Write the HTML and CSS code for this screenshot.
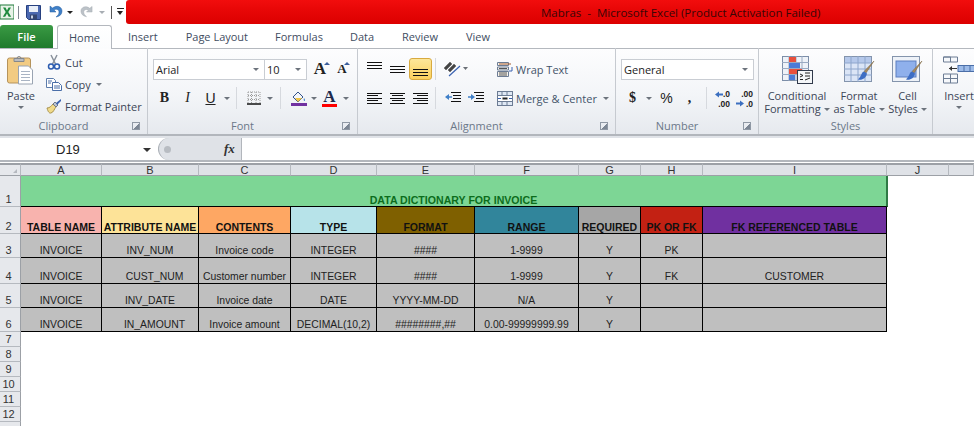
FILE: index.html
```html
<!DOCTYPE html>
<html lang="en">
<head>
    <meta charset="UTF-8">
    <meta name="viewport" content="width=device-width, initial-scale=1.0">
    <title>Mabras - Microsoft Excel</title>
    <link rel="stylesheet" href="styles.css">
</head>
<body>
    <div class="titlebar">
        <div class="quick">
            <svg class="q-excel" width="14" height="16" viewBox="0 0 14 16"><rect x="0" y="1" width="14" height="14" fill="#e8f3e8" stroke="#1f7a3a"/><path d="M3 3.5h2.5L7 6.5l1.6-3H11L8.3 8l2.9 4.800H8.700L7 9.600l-1.800 3.200H2.800L5.700 8z" fill="#1e8a3e"/></svg>
            <span class="q-sep"></span>
            <svg class="q-save" width="15" height="15" viewBox="0 0 15 15"><path d="M.5.500h14v14h-12l-2-2z" fill="#4a68b0" stroke="#27407f"/><rect x="3" y="1" width="9" height="6" fill="#e8eef8"/><rect x="4" y="9.500" width="7" height="5" fill="#33456f"/><rect x="5" y="10.500" width="2" height="3" fill="#c8d2e6"/></svg>
            <svg class="q-undo" width="14" height="14" viewBox="0 0 14 14"><path d="M1 1v6h6L5 5c2-1.500 5-.5 5 2 0 2-1 3.500-3 5 4-.5 6-3 6-6C13 2 8-.500 3.500 3z" fill="#3f80c8" stroke="#2b5f9e" stroke-width=".5"/></svg>
            <span class="q-arrow"></span>
            <svg class="q-redo" width="13" height="14" viewBox="0 0 14 14"><path d="M13 1v6H7l2-2C7 3.500 4 4.500 4 7c0 2 1 3.500 3 5-4-.5-6-3-6-6C1 2 6-.500 10.500 3z" fill="#bcc2c8" stroke="#a4aab0" stroke-width=".5"/></svg>
            <span class="q-arrow grey"></span>
            <span class="q-sep second"></span>
            <span class="q-custom"></span>
        </div>
        <div class="title-red"><span class="title-text">Mabras &nbsp;-&nbsp; Microsoft Excel (Product Activation Failed)</span></div>
    </div>

    <div class="tabs">
        <span class="tab-file">File</span>
        <span class="tab-home">Home</span>
        <span class="tab t-insert">Insert</span>
        <span class="tab t-layout">Page Layout</span>
        <span class="tab t-formulas">Formulas</span>
        <span class="tab t-data">Data</span>
        <span class="tab t-review">Review</span>
        <span class="tab t-view">View</span>
    </div>

    <div class="ribbon">
        <!-- clipboard -->
        <section class="group g-clipboard">
            <div class="group-body">
                <div class="big paste">
                    <svg width="28" height="31" viewBox="0 0 28 31"><rect x=".5" y="3.500" width="23" height="25" rx="2" fill="#f2cb82" stroke="#b5935c"/><path d="M7 4h10v3H7z" fill="#b9bcc0" stroke="#85888c"/><path d="M10 4a2 2 0 0 1 4 0" fill="none" stroke="#85888c"/><path d="M11.500 11.500h10l4 4v14h-14z" fill="#fff" stroke="#9aa4b2"/><path d="M14 17h9M14 20h9M14 23h9M14 26h9" stroke="#a9b4c4"/></svg>
                    <span class="big-text">Paste</span>
                    <span class="arrow"></span>
                </div>
                <div class="small-list">
                    <div class="small-row">
                        <svg width="16" height="16" viewBox="0 0 16 16"><path d="M5 1l4.500 9M11 1L6.500 10" stroke="#8a929c" stroke-width="1.500" fill="none"/><circle cx="5" cy="12.500" r="2.500" fill="none" stroke="#2c5cb0" stroke-width="1.500"/><circle cx="11" cy="12.500" r="2.500" fill="none" stroke="#2c5cb0" stroke-width="1.500"/></svg>
                        <span>Cut</span>
                    </div>
                    <div class="small-row">
                        <svg width="16" height="16" viewBox="0 0 16 16"><path d="M.5 2.500h7l2 2v7h-9z" fill="#fff" stroke="#5c7cab"/><path d="M6.500 6.500h6l3 3v5h-9z" fill="#fff" stroke="#4a6ea8"/><path d="M2 5h4M2 7h3M8 10h6M8 12h6" stroke="#4a6ea8"/></svg>
                        <span>Copy</span><i class="arrow inline"></i>
                    </div>
                    <div class="small-row">
                        <svg width="16" height="16" viewBox="0 0 16 16"><path d="M1 10c3 0 4-2 6-4l3 3c-2 2-2 5-5 6-1.500.5-3-1-4-5z" fill="#f0da8a" stroke="#a8924c"/><path d="M7 6l2-2 3 3-2 2z" fill="#bcc4d0" stroke="#70788a"/><path d="M10 5l5-4 0 2-4 4z" fill="#3a62b0"/></svg>
                        <span>Format Painter</span>
                    </div>
                </div>
            </div>
            <div class="group-foot"><span class="group-label">Clipboard</span><span class="launcher"></span></div>
        </section>

        <!-- font -->
        <section class="group g-font">
            <div class="group-body stack">
                <div class="tool-row">
                    <div class="combo c-font">Arial<i class="arrow"></i></div>
                    <div class="combo c-size">10<i class="arrow"></i></div>
                    <span class="tool w-a"><b class="serif grow">A</b><i class="up"></i></span>
                    <span class="tool w-a"><b class="serif shrink">A</b><i class="up blue"></i></span>
                </div>
                <div class="tool-row low">
                    <span class="tool"><b class="serif glyph">B</b></span>
                    <span class="tool"><i class="serif glyph slant">I</i></span>
                    <span class="tool"><u class="sans glyph">U</u></span>
                    <span class="drop"><i class="arrow"></i></span>
                    <span class="sep s5"></span>
                    <span class="tool">
                        <svg width="14" height="14" viewBox="0 0 14 14"><path d="M1 1h12M1 4.500h12M1 8.500h12M1 1v11M4.500 1v11M9 1v11M13 1v11" stroke="#9a9a9a" stroke-dasharray="1 1" fill="none"/><path d="M0 13h14" stroke="#111" stroke-width="1.500"/></svg>
                    </span>
                    <span class="drop"><i class="arrow"></i></span>
                    <span class="sep s6"></span>
                    <span class="tool">
                        <svg width="16" height="16" viewBox="0 0 16 16"><path d="M2 7l5-5 5 5-5 5z" fill="#f4f6fa" stroke="#33538a"/><path d="M4 8h7l-4 4z" fill="#f0c648"/><path d="M13 8c1 1.500 1.500 2.500.5 3-1 0-1-1.500-.5-3z" fill="#3f7fc8"/><rect x="0" y="13" width="16" height="3" fill="#7030a0"/></svg>
                    </span>
                    <span class="drop narrow"><i class="arrow"></i></span>
                    <span class="tool fontcolor"><b class="serif glyph-a">A</b><i class="color-bar"></i></span>
                    <span class="drop"><i class="arrow"></i></span>
                </div>
            </div>
            <div class="group-foot"><span class="group-label">Font</span><span class="launcher"></span></div>
        </section>

        <!-- alignment -->
        <section class="group g-align">
            <div class="group-body">
                <div class="align-tools stack">
                    <div class="tool-row">
                        <span class="tool"><i class="lines top"><b class="l"></b><b class="l"></b><b class="l"></b></i></span>
                        <span class="tool"><i class="lines"><b class="l"></b><b class="l"></b><b class="l"></b></i></span>
                        <span class="tool on"><i class="lines bottom"><b class="l"></b><b class="l"></b><b class="l"></b></i></span>
                        <span class="sep s3"></span>
                        <span class="tool orient">
                            <svg width="26" height="16" viewBox="0 0 26 16"><path d="M1 7l6-6 2 2-6 6zM5 9l6-6 2 2-6 6z" fill="#444" stroke="#444" stroke-width=".4"/><path d="M6 15L17 5" stroke="#3a62b0" stroke-width="1.200"/><path d="M20 6h5l-2.500 3z" fill="#6a6f76"/></svg>
                        </span>
                    </div>
                    <div class="tool-row low">
                        <span class="tool"><i class="lines five left"><b class="l"></b><b class="m"></b><b class="l"></b><b class="m"></b><b class="l"></b></i></span>
                        <span class="tool"><i class="lines five center"><b class="l"></b><b class="m"></b><b class="l"></b><b class="m"></b><b class="l"></b></i></span>
                        <span class="tool"><i class="lines five right"><b class="l"></b><b class="m"></b><b class="l"></b><b class="m"></b><b class="l"></b></i></span>
                        <span class="sep s3"></span>
                        <span class="tool">
                            <svg width="16" height="12" viewBox="0 0 16 12"><path d="M6 .5h10M8 3.500h8M8 6.500h8M6 9.500h10" stroke="#111"/><path d="M0 5l4-3v6z" fill="#3f7fc8"/><path d="M4 5h3" stroke="#3f7fc8" stroke-width="1.500"/></svg>
                        </span>
                        <span class="tool">
                            <svg width="16" height="12" viewBox="0 0 16 12"><path d="M6 .5h10M8 3.500h8M8 6.500h8M6 9.500h10" stroke="#111"/><path d="M7 5L3 2v6z" fill="#3f7fc8"/><path d="M0 5h4" stroke="#3f7fc8" stroke-width="1.500"/></svg>
                        </span>
                    </div>
                </div>
                <div class="align-wide stack">
                    <div class="wide-row">
                        <svg width="16" height="15" viewBox="0 0 16 15"><path d="M.5 .5h11v3h-11zM.5 5h11v3h-11zM.5 9.500h11v5h-11z" fill="#f6f3ec" stroke="#6c7c94"/><path d="M2 2h12" stroke="#a55a2c"/><path d="M2 6.500h8M2 11h8M2 13h8" stroke="#555"/><path d="M15 5v4h-3" fill="none" stroke="#3a62b0"/></svg>
                        <span>Wrap Text</span>
                    </div>
                    <div class="wide-row">
                        <svg width="16" height="15" viewBox="0 0 16 15"><rect x=".5" y=".5" width="15" height="14" fill="#dfe8f4" stroke="#6c7c94"/><path d="M0 4.500h16M0 10.500h16M5 0v4M10 0v4M5 11v4M10 11v4" stroke="#6c7c94"/><rect x="1" y="5" width="14" height="5" fill="#fff"/><path d="M5.500 7.500h5" stroke="#222" stroke-width="2"/><path d="M1 7.500h3M12 7.500h3" stroke="#3a62b0"/></svg>
                        <span>Merge &amp; Center</span><i class="arrow inline"></i>
                    </div>
                </div>
            </div>
            <div class="group-foot"><span class="group-label">Alignment</span><span class="launcher"></span></div>
        </section>

        <!-- number -->
        <section class="group g-number">
            <div class="group-body stack">
                <div class="tool-row">
                    <div class="combo c-general">General<i class="arrow"></i></div>
                </div>
                <div class="tool-row low">
                    <span class="tool"><b class="serif glyph">$</b></span>
                    <span class="drop"><i class="arrow"></i></span>
                    <span class="tool pct"><span class="sans glyph">%</span></span>
                    <span class="tool"><b class="serif glyph">,</b></span>
                    <span class="sep s5"></span>
                    <span class="tool dec">
                        <svg class="dec-arrow" width="8" height="7" viewBox="0 0 8 7"><path d="M0 3.500L4 .5v2h4v2H4v2z" fill="#3b6fc0"/></svg>
                        <span class="dec-text">.0<br>.00</span>
                    </span>
                    <span class="tool dec">
                        <svg class="dec-arrow low" width="8" height="7" viewBox="0 0 8 7"><path d="M8 3.500L4 .5v2H0v2h4v2z" fill="#3b6fc0"/></svg>
                        <span class="dec-text">.00<br>.0</span>
                    </span>
                </div>
            </div>
            <div class="group-foot"><span class="group-label">Number</span><span class="launcher"></span></div>
        </section>

        <!-- styles -->
        <section class="group g-styles">
            <div class="group-body">
                <div class="big b-cond">
                    <svg width="31" height="28" viewBox="0 0 31 28"><rect x=".5" y=".5" width="26" height="24" fill="#eef2f8" stroke="#7c8ea8"/><path d="M0 6.500h27M0 12.500h27M0 18.500h27M7 0v25M14 0v25M20 0v25" stroke="#9aaac2"/><rect x="7" y="1" width="7" height="5" fill="#e8503c"/><rect x="7" y="7" width="11" height="5" fill="#4a7bd8"/><rect x="7" y="13" width="13" height="5" fill="#e8503c"/><rect x="7" y="19" width="6" height="5" fill="#4a7bd8"/><rect x="15.500" y="14.500" width="15" height="13" fill="#f4f6f8" stroke="#30394a"/><path d="M18 18l3 1.500-3 1.500M23 17h5M23 20h5M18 23.500h3M23 24l5-2" stroke="#222" fill="none"/></svg>
                    <span class="big-text">Conditional<br>Formatting<i class="arrow inline tight"></i></span>
                </div>
                <div class="big b-table">
                    <svg width="31" height="28" viewBox="0 0 31 28"><rect x=".5" y=".5" width="27" height="25" fill="#dbe5f6" stroke="#8494ac"/><rect x="1" y="1" width="26" height="6" fill="#b5c8ea"/><path d="M0 7h28M0 13h28M0 19h28M7 0v26M14 0v26M21 0v26" stroke="#8ea6cc"/><path d="M30 5L22 17l-2-1.500z" fill="#a88a5c" stroke="#77613c" stroke-width=".5"/><path d="M20 15.500c-3 1-2 4-6 8 4 1 8-1 9-6z" fill="#3e6ec4"/></svg>
                    <span class="big-text">Format<br>as Table<i class="arrow inline tight"></i></span>
                </div>
                <div class="big b-cell">
                    <svg width="31" height="28" viewBox="0 0 31 28"><rect x=".5" y=".5" width="27" height="25" fill="#eef2f8" stroke="#8494ac"/><rect x="4" y="5" width="20" height="16" fill="#8fb0ec" stroke="#5c7ec0"/><path d="M30 5L22 17l-2-1.500z" fill="#a88a5c" stroke="#77613c" stroke-width=".5"/><path d="M20 15.500c-3 1-2 4-6 8 4 1 8-1 9-6z" fill="#3e6ec4"/></svg>
                    <span class="big-text">Cell<br>Styles<i class="arrow inline tight"></i></span>
                </div>
            </div>
            <div class="group-foot"><span class="group-label">Styles</span></div>
        </section>

        <!-- cells, cut off by the window -->
        <section class="group g-cells">
            <div class="group-body">
                <div class="big b-insert">
                    <svg width="32" height="28" viewBox="0 0 32 28"><path d="M.5 1h14v5h-14zM.5 1h7M7.500 1v5M.5 18h14v9h-14zM.5 22.500h14M7.500 18v9" fill="#f6f8fb" stroke="#6c7c94"/><rect x="15" y="9.500" width="17" height="6" fill="#9dbbe8" stroke="#4a6ea8"/><path d="M21 9v7M27 9v7" stroke="#4a6ea8"/><path d="M6 12.500h8" stroke="#333"/><path d="M6 12.500l3-2.500v5z" fill="#333"/></svg>
                    <span class="big-text">Insert</span>
                    <span class="arrow"></span>
                </div>
            </div>
            <div class="group-foot"></div>
        </section>
    </div>

    <div class="formula-gap"></div>
    <div class="formula-bar">
        <div class="name-box"><span class="name-text">D19</span><i class="name-arrow"></i></div>
        <div class="fx-part"><span class="fx-knob"></span><span class="fx">fx</span></div>
        <div class="formula-input"></div>
    </div>

    <div class="sheet">
        <div class="corner"><i></i></div>
        <div class="col">A</div><div class="col">B</div><div class="col">C</div><div class="col">D</div><div class="col">E</div>
        <div class="col">F</div><div class="col">G</div><div class="col">H</div><div class="col">I</div><div class="col">J</div><div class="col"></div>

        <div class="row">1</div>
        <div class="cell merged">DATA DICTIONARY FOR INVOICE</div>

        <div class="row">2</div>
        <div class="cell head h-pink">TABLE NAME</div>
        <div class="cell head h-yellow">ATTRIBUTE NAME</div>
        <div class="cell head h-orange">CONTENTS</div>
        <div class="cell head h-cyan">TYPE</div>
        <div class="cell head h-brown">FORMAT</div>
        <div class="cell head h-teal">RANGE</div>
        <div class="cell head h-grey">REQUIRED</div>
        <div class="cell head h-red">PK OR FK</div>
        <div class="cell head h-purple">FK REFERENCED TABLE</div>

        <div class="row">3</div>
        <div class="cell">INVOICE</div><div class="cell">INV_NUM</div><div class="cell">Invoice code</div><div class="cell">INTEGER</div>
        <div class="cell">####</div><div class="cell">1-9999</div><div class="cell">Y</div><div class="cell">PK</div><div class="cell"></div>

        <div class="row">4</div>
        <div class="cell">INVOICE</div><div class="cell shifted">CUST_NUM</div><div class="cell">Customer number</div><div class="cell">INTEGER</div>
        <div class="cell">####</div><div class="cell">1-9999</div><div class="cell">Y</div><div class="cell">FK</div><div class="cell">CUSTOMER</div>

        <div class="row">5</div>
        <div class="cell">INVOICE</div><div class="cell">INV_DATE</div><div class="cell">Invoice date</div><div class="cell">DATE</div>
        <div class="cell">YYYY-MM-DD</div><div class="cell">N/A</div><div class="cell">Y</div><div class="cell"></div><div class="cell"></div>

        <div class="row">6</div>
        <div class="cell">INVOICE</div><div class="cell shifted">IN_AMOUNT</div><div class="cell">Invoice amount</div><div class="cell">DECIMAL(10,2)</div>
        <div class="cell">########,##</div><div class="cell">0.00-99999999.99</div><div class="cell">Y</div><div class="cell"></div><div class="cell"></div>

        <div class="row">7</div>
        <div class="row">8</div>
        <div class="row">9</div>
        <div class="row">10</div>
        <div class="row">11</div>
        <div class="row">12</div>
        <div class="row"></div>
    </div>
</body>
</html>
```

FILE: styles.css
```css
html,body{margin:0;padding:0;height:426px;overflow:hidden;background:#fff;}
body{font-family:"Open Sans",sans-serif;font-size:11px;color:#3c4657;}
i{font-style:normal;}
.serif{font-family:"Liberation Serif",serif;}
.sans{font-family:"Liberation Sans",sans-serif;}
.slant{font-style:italic;}

/* title bar */
.titlebar{display:flex;height:24px;background:#fff;}
.quick{width:126px;flex:none;display:flex;align-items:center;position:relative;}
.q-sep{width:1px;height:13px;background:#7f8790;margin:0 7px 0 4px;}
.q-sep.second{margin:0 5px 0 6px;background:#555;}
.q-undo{margin-left:8px;}
.q-redo{margin-left:7px;}
.q-arrow{width:0;height:0;border:3px solid transparent;border-top:3px solid #222;border-bottom:0;margin-left:4px;}
.q-arrow.grey{border-top-color:#a8adb3;margin-left:6px;}
.q-custom{width:7px;height:7px;border-top:1px solid #222;position:relative;}
.q-custom:after{content:"";position:absolute;left:0;top:2px;border:3.500px solid transparent;border-top:4px solid #222;border-bottom:0;}
.title-red{flex:1;background:linear-gradient(#f20d0d,#e80707 40%,#dc0000);border-radius:3px 0 0 3px;display:flex;align-items:center;padding-left:415px;}
.title-text{font-size:11.500px;color:#3a0606;white-space:nowrap;}

/* tabs */
.tabs{height:24px;display:flex;align-items:flex-start;background:#fff;color:#3f4d5f;padding-top:1px;box-sizing:border-box;}
.tab-file{width:53px;height:23px;background:linear-gradient(#3a9a44,#1f7a2c);color:#fff;border-radius:3px 3px 0 0;display:flex;align-items:center;justify-content:center;font-weight:600;font-size:11px;}
.tab-home{width:55px;height:24px;margin-left:4px;background:linear-gradient(#fff,#fbfcfd);border:1px solid #b4b8be;border-bottom:0;border-radius:3px 3px 0 0;box-sizing:border-box;display:flex;align-items:center;justify-content:center;position:relative;z-index:1;}
.tab{height:23px;display:flex;align-items:center;}
.t-insert{margin-left:16px;}
.t-layout{margin-left:28px;}
.t-formulas{margin-left:27px;}
.t-data{margin-left:27px;}
.t-review{margin-left:28px;}
.t-view{margin-left:28px;}

/* ribbon */
.ribbon{height:86px;display:flex;background:linear-gradient(#fdfdfe,#f3f5f8 55%,#e6e9ee);box-shadow:inset 0 1px 0 #b4b8be;border-bottom:2px solid #b2b6bc;overflow:hidden;}
.group{flex:none;display:flex;flex-direction:column;border-right:1px solid #c6cad0;box-sizing:border-box;height:86px;}
.g-clipboard{width:148px;}
.g-font{width:210px;padding-left:5px;}
.g-align{width:258px;padding-left:5px;}
.g-number{width:143px;padding-left:5px;}
.g-styles{width:174px;padding-left:6px;}
.g-cells{flex:1;border-right:0;}
.group-body{flex:1;display:flex;min-height:0;}
.stack{flex-direction:column;}
.group-foot{height:17px;flex:none;display:flex;align-items:center;color:#6b7889;margin-left:-5px;}
.g-clipboard .group-foot{margin-left:0;}
.g-styles .group-foot{margin-left:-6px;}
.group-label{flex:1;text-align:center;}
.launcher{width:20px;height:8px;flex:none;position:relative;}
.launcher:after{content:"";position:absolute;left:5px;top:0;width:6px;height:6px;border:1px solid #8f98a4;background:linear-gradient(135deg,transparent 55%,#7c8694 55%);}

.big{display:flex;flex-direction:column;align-items:center;padding-top:5px;text-align:center;line-height:13px;box-sizing:border-box;}
.big svg{height:34px;flex:none;display:block;}
.big-text{margin-top:2px;white-space:nowrap;}
.paste{width:42px;}
.b-cond{width:64px;}
.b-table{width:60px;}
.b-cell{width:37px;}
.b-insert{width:52px;}
.big > .arrow{margin-top:4px;}
.arrow{display:inline-block;width:0;height:0;border:3px solid transparent;border-top:3px solid #6c737c;border-bottom:0;}
.arrow.inline{margin-left:3px;vertical-align:2px;}
.arrow.inline.tight{margin-left:3px;}

.small-list{margin-left:4px;padding-top:3px;display:flex;flex-direction:column;}
.small-row{height:22px;display:flex;align-items:center;gap:3px;white-space:nowrap;}
.small-row .arrow.inline{margin-left:2px;}

.tool-row{height:22px;margin-top:10px;display:flex;align-items:center;}
.tool-row.low{margin-top:7px;}
.tool{width:23px;height:22px;display:flex;align-items:center;justify-content:center;flex:none;position:relative;box-sizing:border-box;color:#222;}
.drop{width:9px;display:flex;justify-content:center;flex:none;}
.drop.narrow{width:8px;}
.sep{width:1px;height:22px;background:#d6d9de;flex:none;}
.s3{margin:0 5px 0 3px;}
.s5{margin:0 5px;}
.s6{margin:0 6px;}
.glyph{font-size:14px;line-height:14px;}
.glyph-a{font-size:17px;line-height:17px;color:#1c2a4c;margin-top:-4px;}
.color-bar{position:absolute;left:4px;right:4px;bottom:2px;height:3px;background:#f00;}
.w-a{width:20px;}
.g-font .w-a:first-of-type{margin-left:3px;}
.grow{font-size:17px;color:#222;}
.shrink{font-size:13px;color:#222;margin-left:4px;}
.up{position:absolute;right:0;top:4px;border:3px solid transparent;border-bottom:3px solid #3b5f9e;border-top:0;}
.combo{height:21px;box-sizing:border-box;border:1px solid #c9cdd3;background:#fff;display:flex;align-items:center;justify-content:space-between;padding:0 5px 0 2px;color:#222;font-size:11px;flex:none;}
.c-font{width:112px;font-size:11px;}
.c-size{width:42px;border-left:0;}
.c-general{width:133px;}

/* alignment */
.align-tools{display:flex;width:128px;flex:none;}
.align-wide{display:flex;margin-left:6px;}
.wide-row{height:22px;margin-top:10px;display:flex;align-items:center;gap:3px;white-space:nowrap;color:#44546a;}
.wide-row + .wide-row{margin-top:7px;}
.tool.on{background:linear-gradient(#fde79a,#fbd15e);border:1px solid #d8aa3f;border-radius:3px;}
.orient{width:30px;}
.lines{display:flex;flex-direction:column;gap:2px;width:15px;align-items:center;}
.lines.five{gap:1.500px;}
.lines b{display:block;height:1px;background:#111;}
.lines .l{width:15px;}
.lines .m{width:11px;}
.lines.left{align-items:flex-start;}
.lines.right{align-items:flex-end;}
.lines.top{align-self:flex-start;margin-top:4px;}
.lines.bottom{align-self:flex-end;margin-bottom:3px;}

/* number */
.pct{margin-left:2px;}
.dec{display:block;}
.dec-text{display:block;text-align:right;padding:2px 5px 0 0;font-family:"Liberation Sans",sans-serif;font-weight:bold;font-size:8.500px;line-height:10px;}
.dec-arrow{position:absolute;left:3px;top:4px;}
.dec-arrow.low{top:13px;left:1px;}

/* formula bar */
.formula-gap{height:2px;background:#e0e3e8;}
.formula-bar{height:22px;display:flex;background:#fff;border-bottom:2px solid #b2b6bc;box-sizing:content-box;}
.name-box{width:158px;display:flex;align-items:center;color:#222;font-family:"Liberation Sans",sans-serif;font-size:13px;position:relative;}
.name-text{margin-left:56px;padding-top:1px;}
.name-arrow{position:absolute;left:143px;top:10px;border:4px solid transparent;border-top:4px solid #333;border-bottom:0;}
.fx-part{width:83px;background:#dfe2e7;border-radius:11px 0 0 11px;border-left:1px solid #a9aeb5;box-sizing:border-box;display:flex;align-items:center;position:relative;}
.fx-knob{width:7px;height:7px;border-radius:50%;background:#b8bcc2;margin-left:5px;}
.fx{margin-left:53px;font-family:"Liberation Serif",serif;font-style:italic;font-weight:bold;font-size:13px;color:#333;}
.formula-input{flex:1;border-left:1px solid #b2b6bc;}

/* sheet */
.sheet{margin-top:1px;height:263px;overflow:hidden;display:grid;grid-template-columns:21px 81px 97px 92px 86px 98px 104px 62px 62px 184px 62px 1fr;grid-template-rows:13px 31px 27px 24px 26px 24px 24px repeat(7,15px);font-family:"Liberation Sans",sans-serif;font-size:10.400px;background:#fff;}
.corner{background:#e6e8ec;border-top:2px solid #9ca0a6;border-bottom:1px solid #9ca0a6;border-right:1px solid #b5b9bf;box-sizing:border-box;position:relative;}
.corner i{position:absolute;right:3px;bottom:2px;border:2px solid #b5b9bf;border-top-color:transparent;border-left-color:transparent;}
.col{background:#dfe2e7;border-top:2px solid #9ca0a6;border-bottom:1px solid #9ca0a6;border-right:1px solid #b5b9bf;box-sizing:border-box;text-align:center;line-height:11px;color:#333;font-size:11px;}
.row{grid-column:1;background:#e6e8ec;border-bottom:1px solid #b5b9bf;border-right:1px solid #9ca0a6;box-sizing:border-box;display:flex;align-items:flex-end;justify-content:center;color:#333;font-size:11px;line-height:14px;padding-right:3px;}
.cell{background:#bfbfbf;border-right:1px solid #000;border-bottom:1px solid #000;box-sizing:border-box;display:flex;align-items:flex-end;justify-content:center;color:#222;white-space:nowrap;line-height:12px;overflow:hidden;}
.shifted{padding-left:9px;}
.merged{grid-column:2 / span 9;background:#7dd695;color:#0c6d1c;font-weight:bold;font-size:10.600px;border-right:2px solid #2f7a45;margin-right:-1px;}
.head{font-weight:bold;color:#111;font-size:10.500px;}
.h-pink{background:#f8b3ae;}
.h-yellow{background:#fde398;}
.h-orange{background:#fea763;}
.h-cyan{background:#b7e3e9;}
.h-brown{background:#7f6000;}
.h-teal{background:#31859b;}
.h-grey{background:#a6a6a6;}
.h-red{background:#c32113;}
.h-purple{background:#7030a0;}
```
